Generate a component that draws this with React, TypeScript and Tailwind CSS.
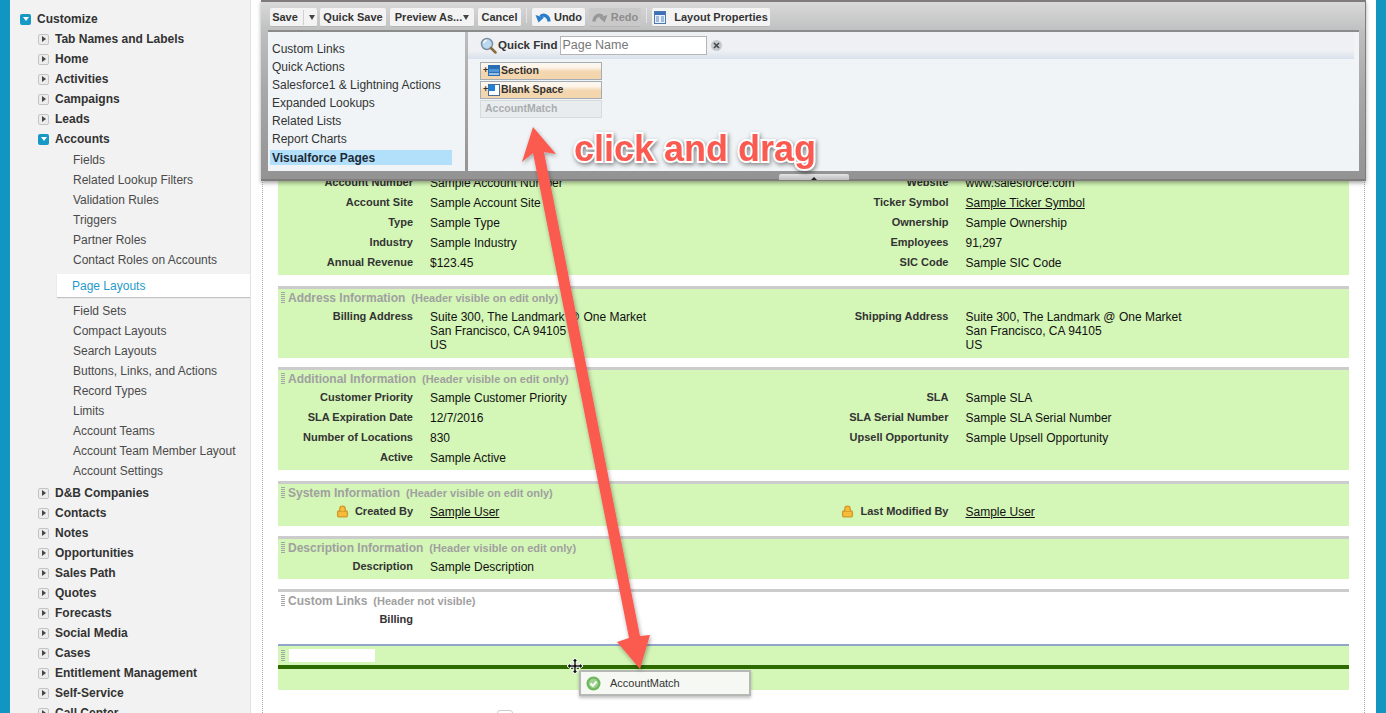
import type { ReactNode } from "react";
import { Lock } from "lucide-react";

const font = "font-['Liberation_Sans',Arial,sans-serif]";

type NavRow = { label: string; kind: "closed" | "open" | "leaf" | "active"; depth?: number };

const topNav: NavRow[] = [
  { label: "Customize", kind: "open", depth: 0 },
  { label: "Tab Names and Labels", kind: "closed" },
  { label: "Home", kind: "closed" },
  { label: "Activities", kind: "closed" },
  { label: "Campaigns", kind: "closed" },
  { label: "Leads", kind: "closed" },
  { label: "Accounts", kind: "open" },
];

const accountLeaves = ["Fields", "Related Lookup Filters", "Validation Rules", "Triggers", "Partner Roles", "Contact Roles on Accounts"];
const accountLeaves2 = ["Field Sets", "Compact Layouts", "Search Layouts", "Buttons, Links, and Actions", "Record Types", "Limits", "Account Teams", "Account Team Member Layout", "Account Settings"];
const bottomNav = ["D&B Companies", "Contacts", "Notes", "Opportunities", "Sales Path", "Quotes", "Forecasts", "Social Media", "Cases", "Entitlement Management", "Self-Service", "Call Center"];

function Toggle({ open }: { open: boolean }) {
  if (open) {
    return (
      <span className="flex h-[11px] w-[11px] shrink-0 items-center justify-center rounded-[2px] bg-[#1798c5]">
        <span className="h-0 w-0 border-x-[3px] border-t-[4px] border-x-transparent border-t-white" />
      </span>
    );
  }
  return (
    <span className="flex h-[11px] w-[11px] shrink-0 items-center justify-center rounded-[2px] border border-[#c4c4c4] bg-[#ececec]">
      <span className="h-0 w-0 border-y-[3px] border-l-[4px] border-y-transparent border-l-[#444]" />
    </span>
  );
}

function NavHead({ label, open, top }: { label: string; open: boolean; top?: boolean }) {
  return (
    <div className={`flex h-5 items-center gap-[6px] text-[12px] font-bold text-[#333] ${top ? "pl-[10px]" : "pl-[28px]"}`}>
      <Toggle open={open} />
      <span>{label}</span>
    </div>
  );
}

function NavLeaf({ label }: { label: string }) {
  return <div className="flex h-5 items-center pl-[63px] text-[12px] text-[#4a4a4a]">{label}</div>;
}

function Sidebar() {
  return (
    <aside className="h-[713px] w-[240px] shrink-0 overflow-hidden bg-[#f2f2f2] pt-[9px] shadow-[1px_0_0_#e2e2e2]">
      {topNav.map((row) => (
        <NavHead key={row.label} label={row.label} open={row.kind === "open"} top={row.depth === 0} />
      ))}
      <div className="mt-[1px]">
        {accountLeaves.map((l) => (
          <NavLeaf key={l} label={l} />
        ))}
      </div>
      <div className="my-[4px] ml-[47px] flex h-[23px] items-center bg-white pl-[15px] pt-px text-[12px] text-[#1f9ac9] shadow-[0_1px_1px_rgba(0,0,0,0.2)]">
        Page Layouts
      </div>
      <div className="mt-[4px]">
        {accountLeaves2.map((l) => (
          <NavLeaf key={l} label={l} />
        ))}
      </div>
      <div className="mt-[2px]">
        {bottomNav.map((l) => (
          <NavHead key={l} label={l} open={false} />
        ))}
      </div>
    </aside>
  );
}

function Field({ label, children, link, lock, tall }: { label?: string; children?: ReactNode; link?: boolean; lock?: boolean; tall?: boolean }) {
  return (
    <div className={`flex gap-[17px] ${tall ? "items-start" : "h-5 items-center"}`}>
      <div className={`flex w-[135px] shrink-0 items-center justify-end gap-[6px] pb-[2px] text-[11px] font-bold leading-[14px] text-[#333] ${tall ? "-mt-px" : ""}`}>
        {lock && <Lock size={13} strokeWidth={2.5} className="fill-[#f5bd3a] text-[#d29a2c]" />}
        <span>{label}</span>
      </div>
      <div className={`text-[12px] leading-[14px] text-[#111] ${link ? "underline" : ""}`}>{children}</div>
    </div>
  );
}

function Grip() {
  return <span className="mr-[3px] h-[12px] w-[4px] shrink-0 bg-[repeating-linear-gradient(to_bottom,#a5a5a5_0,#a5a5a5_1px,transparent_1px,transparent_2px)]" />;
}

function SectionHead({ title, note }: { title: string; note: string }) {
  return (
    <div className="flex h-[18px] items-center pl-[3px] text-[#a0a0a0]">
      <Grip />
      <span className="text-[12px] font-bold">{title}</span>
      <span className="ml-[6px] text-[11px] font-bold">{note}</span>
    </div>
  );
}

function Section({ title, note, children, className }: { title: string; note: string; children: ReactNode; className: string }) {
  return (
    <section className={`border-t-[3px] border-[#cccccc] bg-[#d4f6b7] ${className}`}>
      <SectionHead title={title} note={note} />
      {children}
    </section>
  );
}

function TwoCol({ children }: { children: ReactNode }) {
  return <div className="grid grid-cols-2">{children}</div>;
}

function Btn({ children, disabled, className = "" }: { children: ReactNode; disabled?: boolean; className?: string }) {
  return (
    <div className={`flex h-[19px] items-center justify-center rounded-[2px] border-b border-[#b5b5b5] text-[11px] font-bold ${disabled ? "bg-[#c9c9c9] text-[#8d8d8d]" : "bg-[#f3f3f3] text-[#333]"} ${className}`}>
      {children}
    </div>
  );
}

function Caret() {
  return <span className="h-0 w-0 border-x-[3.5px] border-t-[5px] border-x-transparent border-t-[#444]" />;
}

function Divider() {
  return <span className="mx-[5px] h-[15px] w-px bg-[#e4e4e4]" />;
}

function PaletteItem({ label, icon }: { label: string; icon: ReactNode }) {
  return (
    <div className="flex h-[18px] w-[122px] items-center border border-[#a4adb5] bg-[linear-gradient(to_bottom,#fdf6ec_25%,#f3d6ad_55%)] pb-px pl-[2px] text-[10.5px] font-bold text-[#333]">
      <span className="mr-[1px] w-[4px] text-[9px] leading-none">+</span>
      {icon}
      <span className="ml-[1px]">{label}</span>
    </div>
  );
}

function Toolbar() {
  const palette = ["Custom Links", "Quick Actions", "Salesforce1 & Lightning Actions", "Expanded Lookups", "Related Lists", "Report Charts"];
  return (
    <div className="absolute left-[261px] top-0 flex h-[181px] w-[1105px] flex-col border-t-2 border-r border-b-2 border-[#807c7c] bg-[linear-gradient(to_bottom,#d9d9d9,#bcbdbe_18%,#a8a8a8_50%,#939393)] shadow-[0_2px_4px_rgba(0,0,0,0.35)]">
      <div className="flex h-[28px] shrink-0 items-start pl-[9px] pt-[6px]">
        <Btn className="w-[47px] gap-[5px]">
          <span>Save</span>
          <span className="h-[15px] w-px bg-[#d0d0d0]" />
          <Caret />
        </Btn>
        <Btn className="ml-[3px] w-[66px]">Quick Save</Btn>
        <Btn className="ml-[4px] w-[84px] gap-[1px]">
          <span>Preview As...</span>
          <Caret />
        </Btn>
        <Btn className="ml-[4px] w-[43px]">Cancel</Btn>
        <Divider />
        <Btn className="w-[53px] gap-[3px]">
          <svg width="16" height="14" viewBox="0 0 16 14">
            <path d="M14 11.500C14 6.500 9 3.500 5.500 6.500" fill="none" stroke="#2a7ccc" strokeWidth="3.200" />
            <polygon points="0.500,5 9,7.500 3.500,12.500" fill="#2a7ccc" />
          </svg>
          <span>Undo</span>
        </Btn>
        <Btn disabled className="ml-[4px] w-[52px] gap-[3px]">
          <svg width="16" height="14" viewBox="0 0 16 14">
            <path d="M2 11.500C2 6.500 7 3.500 10.500 6.500" fill="none" stroke="#989898" strokeWidth="3.200" />
            <polygon points="15.500,5 7,7.500 12.500,12.500" fill="#989898" />
          </svg>
          <span>Redo</span>
        </Btn>
        <Divider />
        <Btn className="w-[118px] gap-[8px]">
          <svg width="12" height="13" viewBox="0 0 12 13">
            <rect x="0.500" y="0.500" width="11" height="12" fill="#e8f0fa" stroke="#4c78b0" />
            <rect x="1" y="1" width="10" height="3" fill="#3d70b8" />
            <path d="M2 6h3M7 6h3M2 8h3M7 8h3M2 10h3M7 10h3" stroke="#5c86bd" />
          </svg>
          <span>Layout Properties</span>
        </Btn>
      </div>
      <div className="ml-[7px] mr-[6px] flex h-[141px] shrink-0 border-t-2 border-[#8b8b8b]">
        <div className="w-[197px] shrink-0 bg-[#f0f4f7] pl-[2px] pt-[8px]">
          {palette.map((p) => (
            <div key={p} className="flex h-[18px] items-center pl-[2px] text-[12px] text-[#333]">
              {p}
            </div>
          ))}
          <div className="mt-[2px] flex h-[15px] w-[182px] items-center bg-[#b2dffa] pl-[2px] text-[12px] font-bold text-[#1c2a36]">Visualforce Pages</div>
        </div>
        <div className="ml-[3px] flex-1 bg-[#f0f4f7]">
          <div className="flex h-[27px] w-[886px] items-center bg-[linear-gradient(to_bottom,#eef0f3_70%,#d8e1ec)] pl-[12px]">
            <svg width="17" height="17" viewBox="0 0 17 17" className="shrink-0">
              <circle cx="7" cy="7" r="5.500" fill="#bcd9f2" stroke="#7f8f9e" strokeWidth="1.500" />
              <path d="M3.500 6C4 4.500 5 3.500 6.500 3.200" fill="none" stroke="white" strokeWidth="1.200" />
              <path d="M11 11L15.500 15.500" stroke="#8a6a3c" strokeWidth="2.500" strokeLinecap="round" />
            </svg>
            <span className="ml-px text-[11.5px] font-bold text-[#333]">Quick Find</span>
            <div className="ml-[3px] flex h-[19px] w-[147px] items-center border border-[#b5b5b5] bg-white pb-px pl-[1px] text-[12.5px] text-[#777]">Page Name</div>
            <span className="ml-[4px] flex h-[11px] w-[11px] items-center justify-center rounded-full bg-[#c4c9cd]">
              <svg width="7" height="7" viewBox="0 0 7 7">
                <path d="M1 1L6 6M6 1L1 6" stroke="#444" strokeWidth="1.500" />
              </svg>
            </span>
          </div>
          <div className="ml-[12px] mt-[3px] flex flex-col gap-px">
            <PaletteItem
              label="Section"
              icon={
                <svg width="12" height="11" viewBox="0 0 12 11">
                  <rect width="12" height="11" fill="#2a6fb4" />
                  <rect x="1" y="4" width="10" height="3" fill="#4f96d8" />
                  <rect x="1" y="8" width="10" height="2" fill="#9cc0e3" />
                </svg>
              }
            />
            <PaletteItem
              label="Blank Space"
              icon={
                <svg width="12" height="12" viewBox="0 0 12 12">
                  <rect x="0.500" y="0.500" width="11" height="11" fill="white" stroke="#4a6f96" />
                  <rect x="1" y="1" width="6" height="6" fill="#1f7fdc" />
                </svg>
              }
            />
            <div className="flex h-[18px] w-[122px] items-center border border-[#d5dadd] bg-[#e8ecee] pb-px pl-[4px] text-[10.5px] font-bold text-[#a9adb0]">AccountMatch</div>
          </div>
        </div>
      </div>
      {/* collapse handle */}
      <span className="absolute bottom-[-1px] left-[518px] flex h-[6px] w-[70px] items-end justify-center rounded-t-[2px] bg-[linear-gradient(to_bottom,#e4e4e4,#bdbdbd)]">
        <span className="h-0 w-0 border-x-[3px] border-b-[3px] border-x-transparent border-b-[#222]" />
      </span>
    </div>
  );
}

function Arrow() {
  return (
    <svg className="pointer-events-none absolute left-0 top-0" width="1386" height="713" viewBox="0 0 1386 713">
      <defs>
        <filter id="arrow-shadow" x="-20%" y="-20%" width="140%" height="140%">
          <feDropShadow dx="1" dy="2" stdDeviation="2" floodColor="#000" floodOpacity="0.35" />
        </filter>
      </defs>
      <polygon
        filter="url(#arrow-shadow)"
        fill="#fb5a50"
        points="533,127 556,154 544,152 640,636 650,635 640,669 617,642 629,638 533,153 522,162"
      />
    </svg>
  );
}

export default function App() {
  return (
    <div className={`relative flex h-[713px] w-[1386px] overflow-hidden bg-white ${font}`}>
      <div className="h-full w-[10px] shrink-0 bg-[#1395c1]" />
      <Sidebar />
      <main className="ml-[12px] h-full w-[1103px] shrink-0 border-x border-dotted border-[#a9a9a9] px-[15px]">
        <section className="mt-[150px] bg-[#d4f6b7] pb-[2px] pt-[23px]">
          <TwoCol>
            <Field label="Account Number">Sample Account Number</Field>
            <Field label="Website">www.salesforce.com</Field>
            <Field label="Account Site">Sample Account Site</Field>
            <Field label="Ticker Symbol" link>Sample Ticker Symbol</Field>
            <Field label="Type">Sample Type</Field>
            <Field label="Ownership">Sample Ownership</Field>
            <Field label="Industry">Sample Industry</Field>
            <Field label="Employees">91,297</Field>
            <Field label="Annual Revenue">$123.45</Field>
            <Field label="SIC Code">Sample SIC Code</Field>
          </TwoCol>
        </section>
        <Section className="mt-[11px] pb-[6px]" title="Address Information" note="(Header visible on edit only)">
          <div className="pt-[3px]">
            <TwoCol>
              <Field tall label="Billing Address">
                Suite 300, The Landmark @ One Market<br />San Francisco, CA 94105<br />US
              </Field>
              <Field tall label="Shipping Address">
                Suite 300, The Landmark @ One Market<br />San Francisco, CA 94105<br />US
              </Field>
            </TwoCol>
          </div>
        </Section>
        <Section className="mt-[9px] pb-[2px]" title="Additional Information" note="(Header visible on edit only)">
          <TwoCol>
            <Field label="Customer Priority">Sample Customer Priority</Field>
            <Field label="SLA">Sample SLA</Field>
            <Field label="SLA Expiration Date">12/7/2016</Field>
            <Field label="SLA Serial Number">Sample SLA Serial Number</Field>
            <Field label="Number of Locations">830</Field>
            <Field label="Upsell Opportunity">Sample Upsell Opportunity</Field>
            <Field label="Active">Sample Active</Field>
            <div />
          </TwoCol>
        </Section>
        <Section className="mt-[11px] pb-[4px]" title="System Information" note="(Header visible on edit only)">
          <TwoCol>
            <Field label="Created By" lock link>Sample User</Field>
            <Field label="Last Modified By" lock link>Sample User</Field>
          </TwoCol>
        </Section>
        <Section className="mt-[10px] pb-[2px]" title="Description Information" note="(Header visible on edit only)">
          <Field label="Description">Sample Description</Field>
        </Section>
        <section className="mt-[10px] border-t-[3px] border-[#cccccc] pb-[14px]">
          <SectionHead title="Custom Links" note="(Header not visible)" />
          <Field label="Billing" />
        </section>
        <section className="h-[46px] border-t-2 border-[#8fa6c8] bg-[#d4f6b7]">
          <div className="flex h-[19px] items-center pl-[3px]">
            <Grip />
            <div className="ml-[1px] h-[13px] w-[86px] bg-white" />
          </div>
          <div className="h-[4px] bg-[#2c6a00]" />
        </section>
        <div className="ml-[219px] mt-[20px] h-[8px] w-[16px] rounded-[3px] border border-[#cccccc]" />
      </main>
      <div className="ml-[11px] h-full w-[10px] shrink-0 bg-[#1395c1]" />

      <Toolbar />

      {/* drag ghost */}
      <div className="absolute left-[579px] top-[670px] flex h-[26px] w-[172px] items-center border-2 border-[#b5b8b5] bg-[#f6f8f4] pl-[5px] text-[11px] text-[#333] shadow-[0_2px_3px_rgba(0,0,0,0.25)]">
        <svg width="15" height="15" viewBox="0 0 15 15" className="shrink-0">
          <circle cx="7.500" cy="7.500" r="7" fill="#6fb85c" />
          <circle cx="7.500" cy="7.500" r="4.700" fill="#9fd192" />
          <path d="M4.500 7.500L6.800 9.800L10.500 5.600" fill="none" stroke="white" strokeWidth="2" />
        </svg>
        <span className="ml-[9px]">AccountMatch</span>
      </div>

      <svg className="absolute left-[566px] top-[657px]" width="18" height="18" viewBox="0 0 18 18">
        <path d="M9 1L12 4.500H10.200V7.800H13.500V6L17 9L13.500 12V10.200H10.200V13.500H12L9 17L6 13.500H7.800V10.200H4.500V12L1 9L4.500 6V7.800H7.800V4.500H6Z" fill="#111" stroke="white" strokeWidth="1" />
      </svg>

      <Arrow />

      <div className="absolute left-[574px] top-[128px] text-[36px] font-bold leading-[42px] text-[#fb5a50] [paint-order:stroke_fill] [-webkit-text-stroke:4px_#ffffff] drop-shadow-[1px_2px_2px_rgba(0,0,0,0.45)]">
        click and drag
      </div>
    </div>
  );
}
